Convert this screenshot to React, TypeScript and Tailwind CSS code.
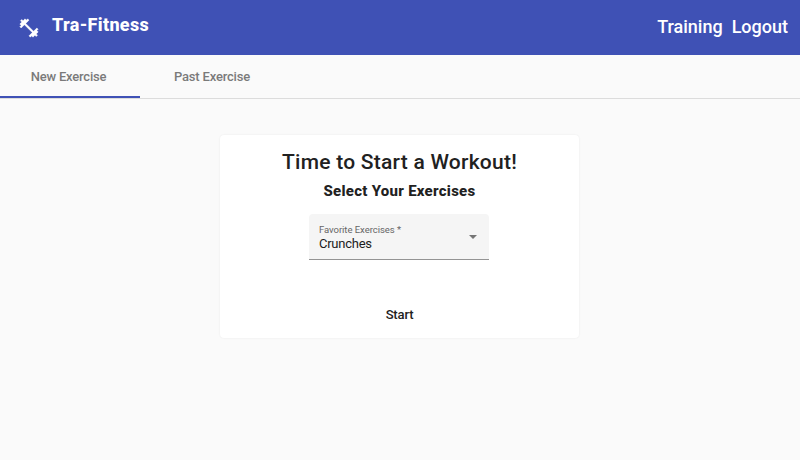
import React from "react";

function Tab({ label, active }: { label: string; active?: boolean }) {
  return (
    <button
      className={
        "flex h-[43px] items-center justify-center border-b-2 pt-[2px] text-[13px] font-medium tracking-[-0.19px] text-[#7a7a7a] " +
        (active ? "w-[140px] border-[#3f51b5] pr-[3px]" : "w-[144px] border-transparent")
      }
    >
      {label}
    </button>
  );
}

export default function App() {
  return (
    <div className="h-[460px] w-[800px] overflow-hidden bg-[#fafafa] font-['Roboto',sans-serif] text-[#212121]">
      <header className="flex h-[55px] items-center justify-between bg-[#3f51b5] pr-3 pl-[18px] text-white">
        <div className="flex items-center gap-3">
          <svg viewBox="0 0 24 24" className="size-[22px] fill-current stroke-current" strokeWidth="0.5">
            <path d="M20.57 14.86L22 13.43 20.57 12 17 15.57 8.43 7 12 3.43 10.57 2 9.14 3.43 7.71 2 5.57 4.14 4.14 2.71 2.71 4.14l1.43 1.43L2 7.71l1.43 1.43L2 10.57 3.43 12 7 8.43 15.57 17 12 20.57 13.43 22l1.43-1.43L16.29 22l2.14-2.14 1.43 1.43 1.43-1.43-1.43-1.43L22 16.29z" />
          </svg>
          <h1 className="mb-[6px] text-[18px] font-extrabold tracking-[0.32px]">Tra-Fitness</h1>
        </div>
        <nav className="mb-[2px] flex gap-[9px] text-[18px] font-medium">
          <a>Training</a>
          <a>Logout</a>
        </nav>
      </header>
      <div className="flex h-11 border-b border-[#dcdcdc]">
        <Tab label="New Exercise" active />
        <Tab label="Past Exercise" />
      </div>
      <main className="mt-9 ml-[220px] flex h-[203px] w-[359px] flex-col items-center rounded bg-white shadow-[0_0_2px_rgba(0,0,0,0.08)]">
        <h2 className="mt-3 text-[21px] leading-[30px] font-medium tracking-[0.24px]">Time to Start a Workout!</h2>
        <h3 className="mt-1 text-[15px] leading-5 font-extrabold tracking-[0.27px]">Select Your Exercises</h3>
        <div className="mt-[13px] mr-px flex h-[46px] w-[180px] items-center justify-between rounded-t border-b border-[#949494] bg-[#f5f5f5] pr-3 pl-[10px]">
          <div>
            <div className="text-[9.5px] leading-[13px] tracking-[-0.05px] text-[#666]">Favorite Exercises *</div>
            <div className="text-[13px] leading-[15px] tracking-[-0.25px] text-[#1c1c1c]">Crunches</div>
          </div>
          <span className="border-x-4 border-t-4 border-x-transparent border-t-[#757575]" />
        </div>
        <button className="mt-[46px] text-[13px] leading-[18px] font-medium tracking-[-0.15px]">Start</button>
      </main>
    </div>
  );
}
